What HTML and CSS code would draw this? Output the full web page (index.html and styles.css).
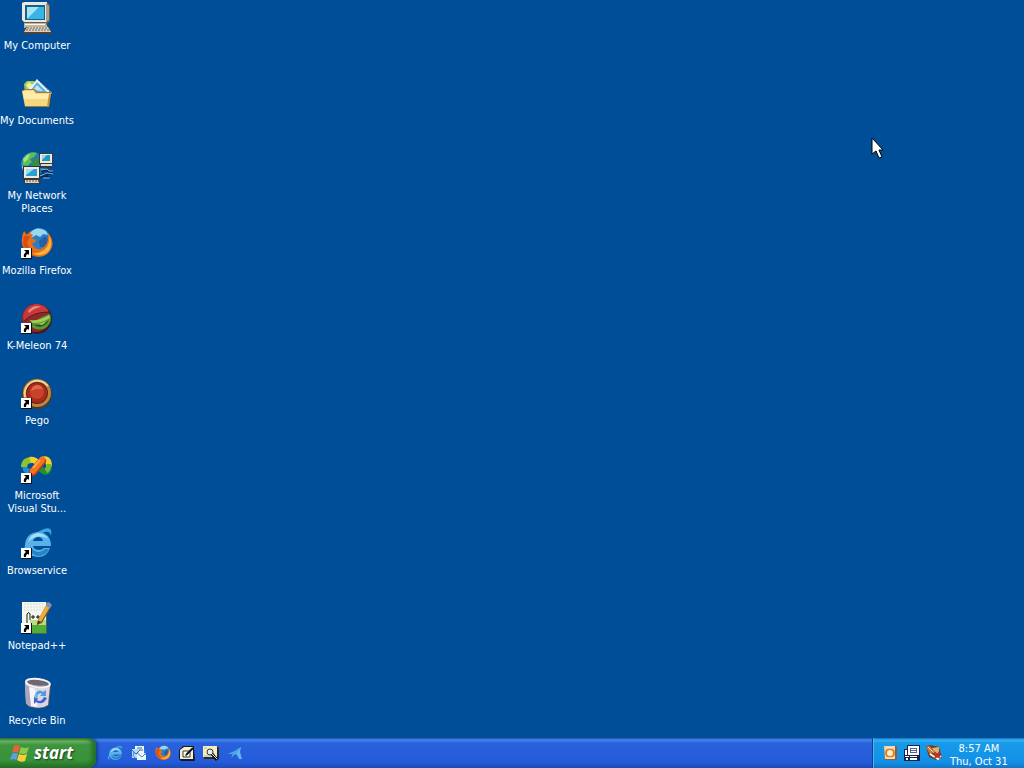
FILE: index.html
```html
<!DOCTYPE html>
<html lang="en">
<head>
<meta charset="utf-8">
<title>Desktop</title>
<link rel="stylesheet" href="styles.css">
</head>
<body>
<svg class="defs" aria-hidden="true">
  <defs>
    <symbol id="shortcut" viewBox="0 0 11 11">
      <path d="M0 0H11V11H0Z" fill="#111"/><path d="M0 0H10V10H0Z" fill="#fff"/>
      <path d="M3 2H8V7L7 6Q5 6 5 9H3Q2 6 5 4Z" fill="#000"/>
    </symbol>
    <symbol id="firefox" viewBox="0 0 32 32">
      <circle cx="17" cy="16" r="14" fill="#d4560d"/>
      <circle cx="18" cy="12" r="11" fill="#2c7ec3"/>
      <path d="M9 6Q16-2 25 4L27 8L22 7L19 10L15 8L12 10L8 11Z" fill="#9bd6f0"/>
      <path d="M18 14L24 9L28 13L24 20L19 20Z" fill="#2260aa"/>
      <path d="M3 4L6 8Q9 5 12 8L10 11L15 13Q15 16 11 16Q13 23 20 22Q28 19 27 6Q35 16 29 24Q22 33 11 28Q3 25 1 17Q0 9 3 4Z" fill="#ea6e18"/>
      <path d="M28 8Q33 18 27 25Q20 31 11 26Q21 27 26 20Q29 15 28 8Z" fill="#fab736"/>
      <path d="M3 9Q6 8 9 10L6 15Q7 22 14 25Q5 25 2 17Z" fill="#d94c16"/>
    </symbol>
    <symbol id="ie" viewBox="0 0 32 32">
      <path d="M6 28Q-2 31 4 19Q11 6 23 2Q32-1 30 9Q29 4 24 5Q12 9 6 22Q3 28 6 28Z" fill="#3da4e2"/>
      <path fill-rule="evenodd" d="M30 19H12Q13 23 18 23Q21 23 23 21H29Q26 30 17 30Q5 29 4 18Q5 6 17 5Q30 6 30 19ZM12 14H22Q21 10 17 10Q13 10 12 14Z" fill="#56b2e8"/>
      <path d="M7 15Q9 7 17 6Q25 7 27 12Q17 6 7 15Z" fill="#a5ddf7"/>
      <path d="M10 20Q13 25 18 25Q21 25 24 22H28Q25 29 17 29Q11 28 8 22Z" fill="#2583c9"/>
    </symbol>
  </defs>
</svg>

<main class="desktop">
  <nav class="icons" aria-label="Desktop icons">
    <button class="shortcut">
      <svg class="icon" viewBox="0 0 32 32" aria-hidden="true">
        <path d="M3 0H26L29 3V19L26 22H4Z" fill="#665f58"/>
        <path d="M1 1L3 0H26V20H3L1 18Z" fill="#eee8dc"/><path d="M25 1L28 4V18L25 20Z" fill="#aaa08d"/>
        <path d="M4 3H24V18H4Z" fill="#12648f"/><path d="M6 5H23V17H6Z" fill="#39b4e4"/><path d="M6 5H18L7 16H6Z" fill="#9ee6f8"/>
        <path d="M3 21H25L27 26H3Z" fill="#bfb6a4"/><path d="M4 22H24V23H4Z" fill="#fff7e3"/>
        <path d="M5 25H28L31 30V32H2V29Z" fill="#4d423e"/><path d="M6 25H27L30 30H3Z" fill="#d8cebc"/>
        <path d="M6 26H27M5 28H29" stroke="#756c65" stroke-dasharray="2 1"/>
      </svg>
      <span class="label">My Computer</span>
    </button>
    <button class="shortcut">
      <svg class="icon" viewBox="0 0 32 32" aria-hidden="true">
        <path d="M3 7L6 4H13L15 7V15H4Z" fill="#9fce58"/><path d="M5 8L8 5L14 10L9 14Z" fill="#efefa1"/>
        <path d="M7 13L16 2L31 16L24 22Z" fill="#e6f3fb"/><path d="M10 13L16 5L26 15L19 19Z" fill="#5cadd9"/><path d="M12 13L16 8L22 14Z" fill="#c1e4f5"/>
        <path d="M17 3L31 17" stroke="#4386bd" stroke-dasharray="2 1"/>
        <path d="M1 14L4 12H14L16 15H30L28 30H4Z" fill="#9e7c31"/>
        <path d="M1 14L4 13H13L15 16H30L27 29H4Z" fill="#f4d77f"/><path d="M2 15L4 14H12L14 17H28L27 22H3Z" fill="#ffecad"/>
        <path d="M28 17L30 16L28 30H26Z" fill="#c39132"/>
      </svg>
      <span class="label">My Documents</span>
    </button>
    <button class="shortcut">
      <svg class="icon" viewBox="0 0 32 32" aria-hidden="true">
        <circle cx="12" cy="12" r="12" fill="#207fae"/><path d="M3 6Q8-1 16 1L13 5L9 7L11 10L6 14L1 13Z" fill="#61bd51"/><path d="M2 7L6 3L9 2L7 7L3 11Z" fill="#a9df7e"/><path d="M13 6L19 8L16 16L11 13Z" fill="#378e3d"/><path d="M1 14L5 15V22L2 18Z" fill="#c5eaf4"/>
        <path d="M18 1H32V12H18Z" fill="#363a42"/><path d="M19 2H31V11H19Z" fill="#eee9d9"/><path d="M21 3H29V9H21Z" fill="#2395ca"/><path d="M21 3H26L21 8Z" fill="#8fdcf1"/>
        <path d="M20 12H31V16H18Z" fill="#343a43"/><path d="M20 12H31V14H20Z" fill="#e1d9c6"/>
        <path d="M2 14H19V28H2Z" fill="#30343b"/><path d="M3 15H18V26H3Z" fill="#eee9dc"/><path d="M5 17H16V24H5Z" fill="#2ba0d4"/><path d="M5 17H13L5 23Z" fill="#9ae1f4"/>
        <path d="M4 27H18L20 32H2Z" fill="#3a3b41"/><path d="M4 28H17L18 31H4Z" fill="#d9d0bd"/><path d="M5 29H18" stroke="#655f5a" stroke-dasharray="2 1"/>
        <path d="M20 19L26 18L28 20H32M19 25L26 24L29 26M21 22H31" stroke="#06274f" stroke-width="2" fill="none"/><path d="M20 18L26 17L28 19H32M19 24L26 21L32 22M22 26H29" stroke="#85b7e6" fill="none"/>
      </svg>
      <span class="label">My Network Places</span>
    </button>
    <button class="shortcut">
      <svg class="icon" viewBox="0 0 32 32" aria-hidden="true"><use href="#firefox" width="32" height="32"/><use href="#shortcut" y="21" width="11" height="11"/></svg>
      <span class="label">Mozilla Firefox</span>
    </button>
    <button class="shortcut">
      <svg class="icon" viewBox="0 0 32 32" aria-hidden="true">
        <circle cx="16" cy="17" r="15" fill="#3b1b1d"/><circle cx="15" cy="16" r="14" fill="#8f292b"/>
        <path d="M2 14Q5 2 17 2Q25 3 28 10Q14 9 3 19Z" fill="#c9393b"/><path d="M7 9Q13 2 20 5Q13 6 8 11Z" fill="#ec8983"/>
        <path d="M8 18Q14 20 21 15L29 12Q32 19 26 25Q18 30 11 25Q13 22 8 18Z" fill="#5b9c32"/><path d="M9 18Q17 20 28 13L29 16Q21 21 12 21Z" fill="#a2cf5a"/>
        <path d="M12 22Q20 25 28 18Q23 27 15 24Z" fill="#284d20"/><path d="M17 21Q22 22 25 18Q24 23 20 23Z" fill="#9fc947"/><path d="M3 19Q12 10 28 10" stroke="#5a191b" fill="none"/>
        <use href="#shortcut" y="21" width="11" height="11"/>
      </svg>
      <span class="label">K-Meleon 74</span>
    </button>
    <button class="shortcut">
      <svg class="icon" viewBox="0 0 32 32" aria-hidden="true">
        <circle cx="16" cy="17" r="15" fill="#583717"/><circle cx="16" cy="16" r="14" fill="#b78545"/><path d="M4 20A13 13 0 0 1 27 9" stroke="#f3d696" stroke-width="2" fill="none"/>
        <circle cx="16" cy="16" r="11" fill="#6e2014"/><circle cx="16" cy="16" r="10" fill="#a92c1a"/><circle cx="16" cy="15" r="7" fill="#c84129"/><path d="M10 14Q11 9 16 8Q20 8 22 12Q16 11 10 14Z" fill="#dc694d"/>
        <use href="#shortcut" y="21" width="11" height="11"/>
      </svg>
      <span class="label">Pego</span>
    </button>
    <button class="shortcut">
      <svg class="icon" viewBox="0 0 32 32" aria-hidden="true">
        <path d="M4 13Q3 22 13 18" stroke="#248bd1" stroke-width="5" fill="none"/><path d="M3 15Q3 8 11 8" stroke="#8bc52e" stroke-width="6" fill="none"/><path d="M9 8Q13 7 18 12" stroke="#f0cf29" stroke-width="6" fill="none"/>
        <path d="M17 14L21 18Q27 23 28 14" stroke="#218f37" stroke-width="6" fill="none"/><path d="M20 8Q28 5 28 14" stroke="#f2ce26" stroke-width="6" fill="none"/><path d="M28 12Q28 17 25 19" stroke="#78b92e" stroke-width="5" fill="none"/>
        <path d="M12 20L21 9" stroke="#b63b13" stroke-width="8" stroke-linecap="round"/><path d="M12 19L21 8" stroke="#f37422" stroke-width="6" stroke-linecap="round"/><path d="M12 16L19 8" stroke="#ffa447" stroke-width="2"/>
        <use href="#shortcut" y="21" width="11" height="11"/>
      </svg>
      <span class="label">Microsoft<br>Visual Stu...</span>
    </button>
    <button class="shortcut">
      <svg class="icon" viewBox="0 0 32 32" aria-hidden="true"><use href="#ie" width="32" height="32"/><use href="#shortcut" y="21" width="11" height="11"/></svg>
      <span class="label">Browservice</span>
    </button>
    <button class="shortcut">
      <svg class="icon" viewBox="0 0 32 32" aria-hidden="true">
        <path d="M1 0H26V32H1Z" fill="#3e6a52"/><path d="M1 0H25V31H1Z" fill="#f4f7ed"/><path d="M3 2H24M3 5H24M3 8H24" stroke="#d0deda" stroke-dasharray="2 1"/>
        <path d="M9 22H25V31H9Z" fill="#52ad35"/><path d="M9 18H25V23H9Z" fill="#b9dc83"/>
        <path d="M6 21V12Q8 9 9 12V18" stroke="#171d14" fill="none"/><path d="M10 15H14M12 13V17M15 15H19M17 13V17" stroke="#111" fill="none"/>
        <path d="M26 2L30 5L21 21L16 23L17 18Z" fill="#7b5427"/><path d="M25 3L29 5L20 20L17 18Z" fill="#e8ad3a"/><path d="M25 1L28 0L31 3L29 6L25 4Z" fill="#8091b8"/><path d="M16 23L17 19L20 20Z" fill="#4c3426"/>
        <use href="#shortcut" y="21" width="11" height="11"/>
      </svg>
      <span class="label">Notepad++</span>
    </button>
    <button class="shortcut">
      <svg class="icon" viewBox="0 0 32 32" aria-hidden="true">
        <path d="M4 5L30 9L28 28Q22 34 8 30L5 27Z" fill="#555365"/><path d="M4 5L29 9L27 28Q20 33 8 29L5 26Z" fill="#dad7e4"/><path d="M4 7L10 11L12 30L8 29L5 26Z" fill="#aaa4bc"/><path d="M8 10L14 12L16 30L10 29Z" fill="#f7f5fb"/>
        <ellipse cx="17" cy="6" rx="13" ry="5" fill="#f6f4f6" transform="rotate(7 17 6)"/><ellipse cx="17" cy="6" rx="11" ry="3" fill="#6b6774" transform="rotate(7 17 6)"/><path d="M8 7Q18 10 26 8Q18 12 8 7Z" fill="#b6b1bd"/>
        <path d="M14 17Q18 11 22 15L25 13V19H19L21 17Q18 15 16 19Z" fill="#4f9cdc"/><path d="M13 20L17 21L16 23Q20 26 23 20L26 21Q22 29 15 25L13 27Z" fill="#4360d0"/><path d="M13 19L16 16L17 19L15 22Z" fill="#63bee5"/>
      </svg>
      <span class="label">Recycle Bin</span>
    </button>
  </nav>
  <svg class="pointer" viewBox="0 0 13 22" aria-hidden="true"><path d="M1 1V17L5 14L8 21L11 20L8 13H12Z" fill="#fff" stroke="#000"/></svg>
</main>

<footer class="taskbar">
  <button class="start">
    <svg class="flag" viewBox="0 0 20 20" aria-hidden="true">
      <path d="M4 3Q7 1 10 3L8 10Q5 8 2 10Z" fill="#e86138"/><path d="M11 4Q15 6 19 4L17 10Q13 12 9 10Z" fill="#8acb48"/><path d="M2 11Q5 9 8 11L6 17Q3 15 0 17Z" fill="#5d9df0"/><path d="M9 11Q13 13 17 11L15 18Q11 20 7 17Z" fill="#f7cf39"/>
    </svg>
    <span>start</span>
  </button>
  <nav class="quick" aria-label="Quick Launch">
    <button aria-label="Internet Explorer"><svg viewBox="0 0 32 32"><use href="#ie" width="32" height="32"/></svg></button>
    <button aria-label="Outlook Express"><svg viewBox="0 0 16 16"><path d="M4 1H13V10H4Z" fill="#f2f7fc"/><path d="M1 4H8V13H1Z" fill="#b6d8f4"/><path d="M1 5L5 9L9 5M6 3H11M8 5H12" stroke="#356daf" fill="none"/><path d="M6 8H15V15H6Z" fill="#edf4fc"/><path d="M6 8L11 12L15 8M4 13Q1 11 3 7M13 5Q16 7 14 10" stroke="#3c8bd4" fill="none"/></svg></button>
    <button aria-label="Firefox"><svg viewBox="0 0 32 32"><use href="#firefox" width="32" height="32"/></svg></button>
    <button aria-label="Show Desktop"><svg viewBox="0 0 16 16"><path d="M4 1H15V4L16 16H2L0 14V5Z" fill="#171a20"/><path d="M1 5L5 2H14V14H1Z" fill="#f4efd9"/><path d="M4 6H11V12H4Z" fill="#fff" stroke="#343b34"/><path d="M7 10L14 3" stroke="#111" stroke-width="2"/><path d="M6 10L8 12" stroke="#567f38"/></svg></button>
    <button aria-label="Search"><svg viewBox="0 0 16 16"><path d="M0 1H14L16 3V14H1Z" fill="#272a2b"/><path d="M0 1H14V12H0Z" fill="#f6edbf"/><path d="M1 3H4M1 11H8" stroke="#c0b98d"/><circle cx="7" cy="7" r="3" fill="#d8f1f3" stroke="#333"/><path d="M9 9L14 15" stroke="#111" stroke-width="3"/><path d="M9 9L14 14" stroke="#dce8ea"/></svg></button>
    <button aria-label="Media"><svg viewBox="0 0 16 16"><path d="M1 9L8 6L14 2L13 7L15 14L12 14L10 10L8 9L4 13L6 9Z" fill="#63b6ef"/><path d="M1 9L8 6L14 2L9 9Z" fill="#4ba5e8"/></svg></button>
  </nav>
  <section class="tray" aria-label="Notification area">
    <div class="status">
      <svg viewBox="0 0 16 16" aria-hidden="true"><path d="M2 1H15V15H3Z" fill="#8f5e38"/><path d="M2 1H13V14H3Z" fill="#f4d6a5"/><circle cx="8" cy="8" r="4" fill="#fff0cb" stroke="#d98131" stroke-width="2"/><path d="M5 3H12M5 13H12" stroke="#fff5d9"/></svg>
      <svg viewBox="0 0 16 16" aria-hidden="true"><path d="M3 0H16V16H0V4H3Z" fill="#19234a"/><path d="M4 1H15V10H4Z" fill="#fff"/><path d="M6 3H13V8H6Z" fill="#52618d"/><path d="M7 4H12V5H7ZM7 6H12V7H7Z" fill="#fff"/><path d="M1 5H3V10H1ZM1 11H5V12H1ZM2 13H4V15H2ZM6 11H13V12H6ZM6 13H13V15H6Z" fill="#fff"/></svg>
      <svg viewBox="0 0 16 16" aria-hidden="true"><path d="M0 2L4 0L13 2L16 13L10 15L3 12Z" fill="#6b3a22"/><path d="M0 2L4 1L8 7L4 10Z" fill="#cf7239"/><path d="M6 3L13 2L13 9L8 7Z" fill="#dfb06f"/><path d="M4 9L12 14L15 11" stroke="#f5f5eb" stroke-width="2" fill="none"/><path d="M2 2L11 11" stroke="#f4e4bd"/><path d="M8 7L14 13M14 7L9 13" stroke="#bd3228" stroke-width="2"/></svg>
    </div>
    <time class="clock" datetime="10-31T08:57">8:57 AM<br>Thu, Oct 31</time>
  </section>
</footer>
</body>
</html>
```
FILE: styles.css
```css
* { box-sizing: border-box; }
html, body { height: 100%; }
body {
  margin: 0;
  display: flex;
  flex-direction: column;
  overflow: hidden;
  background: #004e98;
  color: #fff;
  font-family: "DejaVu Sans Condensed", "Noto Sans", sans-serif;
  font-size: 11px;
  line-height: 13px;
}
button {
  margin: 0;
  padding: 0;
  border: 0;
  background: none;
  color: inherit;
  font: inherit;
}
svg { display: block; }
.defs { position: absolute; width: 0; height: 0; }
.desktop { position: relative; flex: 1; min-height: 0; }
.icons {
  display: grid;
  grid-auto-rows: 75px;
  width: 74px;
  padding-top: 2px;
}
.shortcut {
  display: flex;
  flex-direction: column;
  align-items: center;
  gap: 5px;
}
.icon { width: 32px; height: 32px; }
.label { text-align: center; }
.pointer {
  position: absolute;
  left: 871px;
  top: 137px;
  width: 13px;
  height: 22px;
}
.taskbar {
  display: flex;
  height: 30px;
  background: linear-gradient(#1f4fb4 0, #4186ee 2px, #2a62dc 5px, #245bdb 24px, #1e4cb5 30px);
}
.start {
  display: flex;
  align-items: center;
  gap: 4px;
  width: 96px;
  padding-left: 10px;
  border-radius: 0 8px 8px 0;
  background: linear-gradient(#2c742c 0, #6cb568 3px, #3f9440 7px, #389339 22px, #246c26 30px);
  box-shadow: inset -4px 0 4px #256e2b, 2px 0 3px #173f96;
  font: italic bold 17px/24px "Open Sans", "Noto Sans", sans-serif;
  text-shadow: 1px 1px 2px #173d17;
}
.flag { width: 20px; height: 20px; }
.quick {
  flex: 1;
  display: flex;
  align-items: center;
  gap: 8px;
  padding-left: 11px;
}
.quick svg, .status svg { width: 16px; height: 16px; }
.tray {
  display: flex;
  align-items: center;
  gap: 8px;
  width: 152px;
  padding-left: 9px;
  border-left: 1px solid #113a93;
  background: linear-gradient(#1469bd 0, #34b3f4 2px, #189ae9 5px, #1290e8 24px, #1175c3 30px);
  box-shadow: inset 1px 0 #3ebcf5;
}
.status { display: flex; gap: 6px; }
.clock { padding-top: 3px; text-align: center; white-space: nowrap; }
```
